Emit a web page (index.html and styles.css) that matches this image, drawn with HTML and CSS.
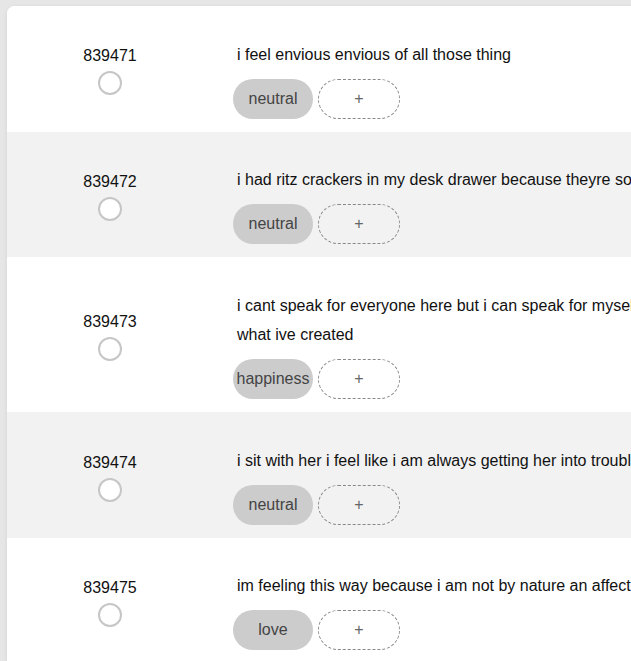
FILE: index.html
```html
<!DOCTYPE html>
<html lang="en">
<head>
<meta charset="utf-8">
<title>Annotations</title>
<link rel="stylesheet" href="styles.css">
</head>
<body>
<div class="card">
  <div class="row">
    <div class="meta"><div class="id">839471</div><div class="radio"></div></div>
    <div class="content">
      <p class="text">i feel envious envious of all those thing</p>
      <div class="tags"><span class="tag">neutral</span><span class="add">+</span></div>
    </div>
  </div>
  <div class="row alt">
    <div class="meta"><div class="id">839472</div><div class="radio"></div></div>
    <div class="content">
      <p class="text">i had ritz crackers in my desk drawer because theyre so delicious</p>
      <div class="tags"><span class="tag">neutral</span><span class="add">+</span></div>
    </div>
  </div>
  <div class="row">
    <div class="meta"><div class="id">839473</div><div class="radio"></div></div>
    <div class="content">
      <p class="text">i cant speak for everyone here but i can speak for myself and i feel very proud of what ive created</p>
      <div class="tags"><span class="tag">happiness</span><span class="add">+</span></div>
    </div>
  </div>
  <div class="row alt">
    <div class="meta"><div class="id">839474</div><div class="radio"></div></div>
    <div class="content">
      <p class="text">i sit with her i feel like i am always getting her into trouble</p>
      <div class="tags"><span class="tag">neutral</span><span class="add">+</span></div>
    </div>
  </div>
  <div class="row">
    <div class="meta"><div class="id">839475</div><div class="radio"></div></div>
    <div class="content">
      <p class="text">im feeling this way because i am not by nature an affectionate person</p>
      <div class="tags"><span class="tag">love</span><span class="add">+</span></div>
    </div>
  </div>
</div>
</body>
</html>
```
FILE: styles.css
```css
html, body {
  margin: 0;
  padding: 0;
  overflow: hidden;
  height: 100%;
}
body {
  background: #e6e6e6;
  font-family: "Liberation Sans", Arial, sans-serif;
  color: #111;
}
.card {
  margin: 6px 0 0 7px;
  width: 860px;
  background: #fff;
  border-radius: 8px 0 0 0;
  box-shadow: 0 1px 4px rgba(0, 0, 0, 0.08);
  overflow: hidden;
}
.row {
  display: flex;
  padding: 33.5px 0 13px;
  background: #fff;
}
.row.alt {
  background: #f2f2f2;
}
.meta {
  width: 206px;
  flex: none;
  display: flex;
  flex-direction: column;
  align-items: center;
  justify-content: center;
  gap: 6px;
  margin-top: -33.5px;
  margin-bottom: -13px;
  padding-top: 4px;
}
.id {
  font-size: 16px;
  line-height: 19px;
}
.radio {
  width: 20px;
  height: 20px;
  border: 2px solid #c6c6c6;
  border-radius: 50%;
  background: #fff;
}
.content {
  margin-left: 20px;
  width: 600px;
  flex: none;
}
.text {
  margin: 0 0 9.6px;
  padding-left: 4px;
  font-size: 16px;
  line-height: 29.5px;
}
.tags {
  display: flex;
  gap: 5px;
}
.tag {
  min-width: 80px;
  box-sizing: border-box;
  height: 40px;
  padding: 0 3px;
  border-radius: 20px;
  background: #cccccc;
  color: #444;
  font-size: 16px;
  display: flex;
  align-items: center;
  justify-content: center;
}
.add {
  width: 82px;
  height: 40px;
  box-sizing: border-box;
  border: 1px dashed #888;
  border-radius: 20px;
  color: #666;
  font-size: 16px;
  display: flex;
  align-items: center;
  justify-content: center;
}
```
